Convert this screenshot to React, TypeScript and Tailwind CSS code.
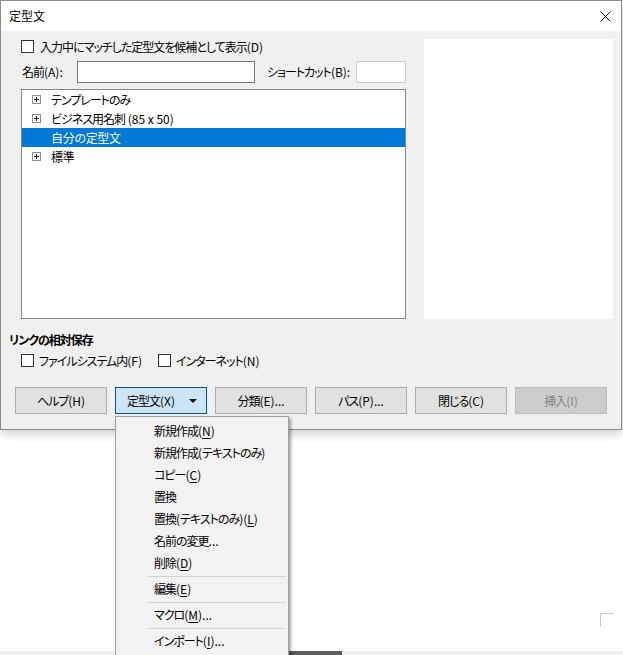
import React from "react";

const J = ({ s }: { s: string }) => (
  <>
    {s.split(/([\x20-\x7e]+)/).map((p, i) =>
      p === "" ? null : /^[\x20-\x7e]+$/.test(p) ? (
        <span key={i} className="tracking-normal">{p}</span>
      ) : (
        <span key={i}>{p}</span>
      )
    )}
  </>
);

const Box = () => (
  <span className="inline-block w-[13px] h-[13px] border border-[#333333] bg-white shrink-0" />
);

const Plus = () => (
  <svg width="9" height="9" viewBox="0 0 9 9" className="shrink-0">
    <rect x="0.5" y="0.5" width="8" height="8" fill="white" stroke="#919191" />
    <line x1="2" y1="4.5" x2="7" y2="4.5" stroke="#222" />
    <line x1="4.5" y1="2" x2="4.5" y2="7" stroke="#222" />
  </svg>
);

const U = ({ c }: { c: string }) => (
  <span className="underline underline-offset-[2px] tracking-normal">{c}</span>
);

type Item = { label: React.ReactNode } | { sep: true };

const menu: Item[] = [
  { label: <><J s="新規作成(" /><U c="N" /><J s=")" /></> },
  { label: <J s="新規作成(テキストのみ)" /> },
  { label: <><J s="コピー(" /><U c="C" /><J s=")" /></> },
  { label: <J s="置換" /> },
  { label: <><J s="置換(テキストのみ)(" /><U c="L" /><J s=")" /></> },
  { label: <J s="名前の変更..." /> },
  { label: <><J s="削除(" /><U c="D" /><J s=")" /></> },
  { sep: true },
  { label: <><J s="編集(" /><U c="E" /><J s=")" /></> },
  { sep: true },
  { label: <><J s="マクロ(" /><U c="M" /><J s=")..." /></> },
  { sep: true },
  { label: <><J s="インポート(" /><U c="I" /><J s=")..." /></> },
];

export default function App() {
  const btn =
    "w-[92px] h-[27px] border border-[#adadad] bg-[#e1e1e1] flex items-center justify-center";
  return (
    <div className="relative w-[623px] h-[655px] overflow-hidden bg-white text-[12px] leading-[16px] tracking-[-1px] text-black font-['Noto_Sans_CJK_JP',sans-serif] [font-feature-settings:'palt'] whitespace-nowrap">
      {/* Dialog */}
      <div className="w-[622px] h-[430px] border border-[#8a8a8a] bg-[#f0f0f0] flex flex-col shadow-[0_3px_10px_rgba(0,0,0,0.22)]">
        <div className="h-[30px] bg-white flex items-center justify-between pl-[8px] pr-[10px] shrink-0">
          <span className="tracking-normal">定型文</span>
          <svg width="11" height="11" viewBox="0 0 11 11">
            <path d="M0.5 0.5 L10.5 10.5 M10.5 0.5 L0.5 10.5" stroke="#111" strokeWidth="1" />
          </svg>
        </div>
        <div className="pt-[8px] pl-[20px] flex gap-[18px]">
          <div className="w-[385px] flex flex-col">
            <div className="h-[15px] flex items-center gap-[6px]">
              <Box />
              <span><J s="入力中にマッチした定型文を候補として表示(D)" /></span>
            </div>
            <div className="mt-[7px] h-[22px] flex items-center">
              <span className="w-[56px] pl-[1px] shrink-0"><J s="名前(A):" /></span>
              <span className="w-[178px] h-[22px] border border-[#7a7a7a] bg-white shrink-0" />
              <span className="ml-[12px] shrink-0"><J s="ショートカット(B):" /></span>
              <span className="ml-auto w-[50px] h-[22px] border border-[#cccccc] bg-white shrink-0" />
            </div>
            <div className="mt-[6px] h-[230px] border border-[#828790] bg-white flex flex-col">
              <div className="h-[19px] flex items-center pl-[10px] gap-[10px]">
                <Plus />
                <span><J s="テンプレートのみ" /></span>
              </div>
              <div className="h-[19px] flex items-center pl-[10px] gap-[10px]">
                <Plus />
                <span><J s="ビジネス用名刺 (85 x 50)" /></span>
              </div>
              <div className="h-[19px] flex items-center pl-[29px] bg-[#0078d7] text-white">
                <span className="tracking-[-0.3px]">自分の定型文</span>
              </div>
              <div className="h-[19px] flex items-center pl-[10px] gap-[10px]">
                <Plus />
                <span className="tracking-[-0.3px]">標準</span>
              </div>
            </div>
          </div>
          <div className="w-[189px] h-[280px] bg-white" />
        </div>
        <div className="mt-[13px] pl-[8px] font-bold">リンクの相対保存</div>
        <div className="mt-[5px] h-[15px] pl-[20px] flex items-center">
          <div className="w-[137px] flex items-center gap-[5px]">
            <Box />
            <span><J s="ファイルシステム内(F)" /></span>
          </div>
          <div className="flex items-center gap-[5px]">
            <Box />
            <span><J s="インターネット(N)" /></span>
          </div>
        </div>
        <div className="mt-[19px] pl-[14px] flex gap-[8px]">
          <div className={btn}><J s="ヘルプ(H)" /></div>
          <div className="w-[92px] h-[27px] border border-[#005499] bg-[#cce4f7] flex items-center pl-[11px]">
            <span><J s="定型文(X)" /></span>
            <svg width="8" height="4" viewBox="0 0 8 4" className="ml-[14px]">
              <path d="M0 0 L8 0 L4 4 Z" fill="#111" />
            </svg>
          </div>
          <div className={btn}><J s="分類(E)..." /></div>
          <div className={btn}><J s="パス(P)..." /></div>
          <div className={btn}><J s="閉じる(C)" /></div>
          <div className="w-[92px] h-[27px] border border-[#bfbfbf] bg-[#cccccc] text-[#838383] flex items-center justify-center">
            <J s="挿入(I)" />
          </div>
        </div>
      </div>

      {/* corner mark */}
      <div className="absolute left-[600px] top-[613px] w-[14px] h-[14px] border-l border-t border-[#c8c8c8]" />

      {/* bottom strip */}
      <div className="absolute left-0 bottom-0 w-full h-[4px] bg-[#f0f0f0]">
        <div className="ml-[270px] w-[72px] h-[4px] bg-[#5c5c5c]" />
      </div>

      {/* dropdown menu */}
      <div className="absolute left-[115px] top-[416px] w-[174px] border border-[#a0a0a0] bg-[#f2f2f2] pt-[3px] pb-[3px] shadow-[2px_2px_3px_rgba(0,0,0,0.35)]">
        {menu.map((m, i) =>
          "sep" in m ? (
            <div key={i} className="h-[4px] flex items-center">
              <div className="ml-[31px] mr-[2px] flex-1 h-px bg-[#d4d4d4]" />
            </div>
          ) : (
            <div key={i} className="h-[22px] flex items-center pl-[38px]">
              {m.label}
            </div>
          )
        )}
      </div>
    </div>
  );
}
